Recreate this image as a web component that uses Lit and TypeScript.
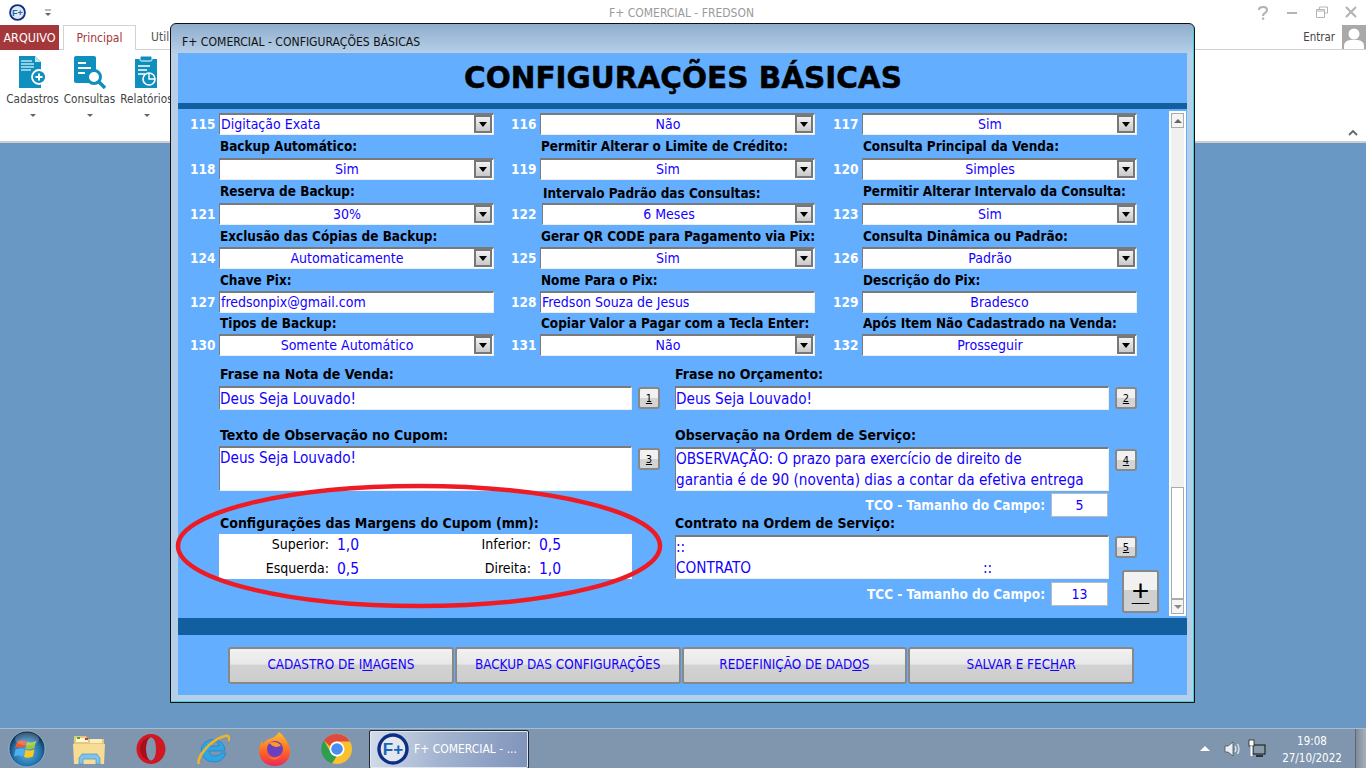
import { LitElement, html, css, svg } from "lit";
import { customElement } from "lit/decorators.js";

type F = { n: number; label?: string; value: string; left?: boolean; plain?: boolean; nudge?: boolean };

const fields: F[] = [
  { n: 115, value: "Digitação Exata", left: true },
  { n: 116, value: "Não" },
  { n: 117, value: "Sim" },
  { n: 118, label: "Backup Automático:", value: "Sim" },
  { n: 119, label: "Permitir Alterar o Limite de Crédito:", value: "Sim" },
  { n: 120, label: "Consulta Principal da Venda:", value: "Simples" },
  { n: 121, label: "Reserva de Backup:", value: "30%" },
  { n: 122, label: "Intervalo Padrão das Consultas:", value: "6 Meses", nudge: true },
  { n: 123, label: "Permitir Alterar Intervalo da Consulta:", value: "Sim" },
  { n: 124, label: "Exclusão das Cópias de Backup:", value: "Automaticamente" },
  { n: 125, label: "Gerar QR CODE para Pagamento via Pix:", value: "Sim" },
  { n: 126, label: "Consulta Dinâmica ou Padrão:", value: "Padrão" },
  { n: 127, label: "Chave Pix:", value: "fredsonpix@gmail.com", left: true, plain: true },
  { n: 128, label: "Nome Para o Pix:", value: "Fredson Souza de Jesus", left: true, plain: true },
  { n: 129, label: "Descrição do Pix:", value: "Bradesco", plain: true },
  { n: 130, label: "Tipos de Backup:", value: "Somente Automático" },
  { n: 131, label: "Copiar Valor a Pagar com a Tecla Enter:", value: "Não" },
  { n: 132, label: "Após Item Não Cadastrado na Venda:", value: "Prosseguir" },
];

const logo = (size: number) => html`<svg width=${size} height=${size} viewBox="0 0 32 32">
  <circle cx="16" cy="16" r="14" fill="#e4e8ee" stroke="#0c2f86" stroke-width="3.4"/>
  <text x="16" y="22" text-anchor="middle" font-family="Liberation Sans, sans-serif" font-weight="700" font-size="17" fill="#1565b8">F+</text>
</svg>`;

const icoDoc = svg`<svg width="30" height="33" viewBox="0 0 30 33">
  <path d="M1 0h16l6 6v26H1z" fill="#0f8fbe"/><path d="M17 0l6 6h-6z" fill="#bfe3f0"/>
  <path d="M3 5h11M3 8h13M3 11h13M3 14h10" stroke="#bfe3f0" stroke-width="1.4"/>
  <circle cx="21" cy="21" r="7" fill="#0f8fbe" stroke="#fff" stroke-width="1.800"/>
  <path d="M21 17.500v7M17.500 21h7" stroke="#fff" stroke-width="2"/></svg>`;
const icoSearch = svg`<svg width="32" height="33" viewBox="0 0 32 33">
  <rect x="0" y="0" width="22" height="27" rx="2" fill="#0f8fbe"/>
  <path d="M4 7h8M4 12h13M4 17h7" stroke="#fff" stroke-width="2"/>
  <circle cx="20" cy="21" r="6.500" fill="#fff" stroke="#0f8fbe" stroke-width="3"/>
  <path d="M25 26l6 6" stroke="#0f8fbe" stroke-width="3.4"/></svg>`;
const icoClip = svg`<svg width="26" height="33" viewBox="0 0 26 33">
  <rect x="1" y="3" width="22" height="29" fill="#0f8fbe"/>
  <rect x="6" y="0" width="12" height="5" rx="1.500" fill="#0f8fbe" stroke="#fff" stroke-width="1"/>
  <path d="M4 10h12M4 14h9M4 18h7" stroke="#fff" stroke-width="1.600"/>
  <circle cx="15" cy="23" r="6" fill="#0f8fbe" stroke="#fff" stroke-width="1.600"/>
  <path d="M15 17v6h6" stroke="#fff" stroke-width="1.400" fill="none"/></svg>`;

const orb = svg`<svg width="38" height="38" viewBox="0 0 38 38">
  <defs><radialGradient id="o" cx=".5" cy=".6" r=".55"><stop offset="0" stop-color="#5cb4e8"/><stop offset=".7" stop-color="#2470a8"/><stop offset="1" stop-color="#0c2f4f"/></radialGradient></defs>
  <circle cx="19" cy="19" r="18" fill="url(#o)" stroke="#9cc0d8" stroke-width=".8"/>
  <path d="M9 12q4-3 9-1l-1.500 7q-5-2-9.500 0z" fill="#f0562c"/>
  <path d="M19 11.500q5 2 9-.5l-1.500 7q-4 2-9 .5z" fill="#9cc83c"/>
  <path d="M7.500 19.500q5-2 9 0l-1.500 7q-4-2-9 0z" fill="#4fb0f0"/>
  <path d="M17.500 20q5 1.500 9-.5l-1.500 7q-4 2-9 .5z" fill="#ffc81c"/>
  <ellipse cx="19" cy="9" rx="12" ry="6.500" fill="#fff" opacity=".2"/></svg>`;
const folder = svg`<svg width="34" height="34" viewBox="0 0 34 34">
  <path d="M2 4h12l2 3h16v22H2z" fill="#e7c877"/>
  <path d="M4 6h12v4H4z" fill="#fff7d8"/><path d="M5 5h3v2H5z" fill="#3fae3f"/><path d="M13 6h3v2h-3z" fill="#c83a3a"/>
  <path d="M18 7h12v4H18z" fill="#f8eebc"/>
  <path d="M1 12h32l-1 20H2z" fill="#f6dc94"/>
  <path d="M7 32v-6l3-4h15l3 4v6h-4v-5H11v5z" fill="#7cc4ee" stroke="#4a94c8" stroke-width=".7"/></svg>`;
const opera = svg`<svg width="32" height="34" viewBox="0 0 32 34">
  <path fill-rule="evenodd" d="M16 2c8 0 14.500 6.700 14.500 15S24 32 16 32 1.500 25.300 1.500 17 8 2 16 2zm0 3.500c-3 0-5 5-5 11.500s2 11.500 5 11.500 5-5 5-11.500S19 5.500 16 5.500z" fill="#d01824"/>
  <path d="M16 5.500c-3 0-5 5-5 11.500s2 11.500 5 11.500c-6 0-11-5-11-11.500S10 5.500 16 5.500z" fill="#a80f1c"/></svg>`;
const ie = svg`<svg width="34" height="34" viewBox="0 0 34 34">
  <path d="M5 18a12 11 0 1 1 24 1H13q1 5 6 5 4 0 6-3h5q-3 9-12 9-11 0-13-12zm8-4h10q-1-5-5-5t-5 5z" fill="#2ea6e4" stroke="#1878c0" stroke-width=".6"/>
  <path d="M3 32c-3-5 10-24 26-28 3-1 5 1 4 5" fill="none" stroke="#f0b428" stroke-width="2.400"/></svg>`;
const fox = svg`<svg width="34" height="36" viewBox="0 0 34 36">
  <defs><linearGradient id="f" x1="0" y1="0" x2="0" y2="1"><stop offset="0" stop-color="#ffbf30"/><stop offset=".55" stop-color="#ff6a22"/><stop offset="1" stop-color="#e8285c"/></linearGradient></defs>
  <path d="M21 1c4 3 10 10 11 18 1 9-6 16-15 16S1 29 1 20c0-5 2-8 3-10l1 3c1-2 3-4 6-5 3-1 7-2 10-7z" fill="url(#f)"/>
  <circle cx="17" cy="18" r="8" fill="#6a3fc0"/><path d="M11 12q8-3 12 3l-5 1q-4-1-7-4z" fill="#ff9a2a"/>
  <path d="M9 24q6 6 14 0-6 9-14 0z" fill="#ff7d1e"/></svg>`;
const chrome = svg`<svg width="32" height="32" viewBox="0 0 32 32">
  <circle cx="16" cy="16" r="15" fill="#fbc02d"/>
  <path d="M16 1a15 15 0 0 1 13 7.500H16a7.500 7.500 0 0 0-7 5L3 7.500A15 15 0 0 1 16 1z" fill="#dd4b3e"/>
  <path d="M3 7.500l6.500 11.500a7.500 7.500 0 0 0 6 4.500L11 30.500A15 15 0 0 1 3 7.500z" fill="#2e9f4f"/>
  <circle cx="16" cy="16" r="7.500" fill="#fff"/><circle cx="16" cy="16" r="5.800" fill="#4a8df0"/></svg>`;

@customElement("app-root")
export class AppRoot extends LitElement {
  static styles = css`
    :host { display: block; width: 1366px; height: 768px; position: relative; overflow: hidden;
      font-family: "DejaVu Sans", sans-serif; font-stretch: condensed; font-size: 13px; background: #6a98c4; }
    * { box-sizing: border-box; }
    .page { display: flex; flex-direction: column; height: 768px; }

    .top { height: 25px; background: #fff; display: flex; align-items: center; position: relative; padding-left: 9px; }
    .qat { margin-left: 18px; display: block; }
    .apptitle { flex: 1; text-align: center; color: #9a9a9a; font-size: 12px; margin-left: 63px; }
    .winbtns { display: flex; width: 118px; }
    .winbtns span { width: 29.500px; display: flex; justify-content: center; }
    .tabs { height: 25px; background: #fff; display: flex; align-items: stretch; border-bottom: 1px solid #d2d2d2; }
    .tab-file { width: 59px; background: #a4373a; color: #fff; font-size: 12.500px; display: flex; align-items: center; justify-content: center; margin-bottom: -1px; }
    .tab-main { width: 73px; margin-left: 4px; border: 1px solid #d2d2d2; border-bottom: 0; background: #fff; margin-bottom: -1px;
      color: #a4373a; font-size: 12px; display: flex; align-items: center; justify-content: center; }
    .tab { margin-left: 15px; color: #555; font-size: 12px; display: flex; align-items: center; }
    .grow { flex: 1; }
    .entrar { color: #444; font-size: 11.400px; display: flex; align-items: center; margin-right: 7px; }
    .avatar { width: 24px; height: 24px; background: #a9a9a9; display: block; }
    .ribbon { height: 93px; background: #fff; border-bottom: 2px solid #cfcfcf; display: flex; padding-left: 4px; position: relative; }
    .rbtn { width: 57px; display: flex; flex-direction: column; align-items: center; color: #444; font-size: 11.700px; padding-top: 5px; }
    .rbtn .ic { height: 34px; display: flex; align-items: center; }
    .rbtn .t { margin-top: 2px; line-height: 16px; white-space: nowrap; }
    .caret { width: 0; height: 0; border: 3px solid transparent; border-top: 3px solid #666; border-bottom: 0; margin-top: 7px; }
    .collapse { position: absolute; right: 8px; bottom: 5px; }
    .desk { flex: 1; }

    .taskbar { height: 40px; background: #8096ae; border-top: 1px solid #a9bccf; display: flex; align-items: center; position: relative; }
    .tb-icon { width: 62px; display: flex; justify-content: center; align-items: center; }
    .tb-start { width: 58px; padding-right: 4px; display: flex; justify-content: center; }
    .tb-active { width: 160px; height: 39px; margin-left: 1px; margin-top: 1px; border: 1px solid #1e2a38; border-radius: 2px;
      background: linear-gradient(100deg, #d3dcea 0, #a3b4d0 45%, #7f93bb 100%); display: flex; align-items: center; padding-left: 7px; color: #fff; font-size: 12px; gap: 5px; box-shadow: inset 0 0 0 1px #dfe7f0; }
    .tray { display: flex; align-items: center; margin-left: auto; height: 100%; color: #fff; }
    .tray svg { display: block; }
    .clock { width: 76px; margin-left: 8px; text-align: center; font-size: 11.500px; line-height: 17px; margin-right: 5px; padding-top: 3px; }
    .showdesk { width: 11px; height: 100%; background: linear-gradient(90deg, #7e8b98, #a6b0ba); border-left: 1px solid #5b6875; }

    .win { position: absolute; left: 170px; top: 23px; width: 1025px; height: 680px; border: 1px solid #111; border-radius: 6px 6px 0 0;
      background: linear-gradient(180deg, #8fadcd 0, #b7d0e8 30px, #b5cfe8 100%); display: flex; flex-direction: column; padding: 0 7px 7px; box-shadow: inset -1px -1px 0 #3fd0d8; }
    .wintitle { height: 29px; flex: none; display: flex; align-items: flex-end; font-size: 12.100px; color: #111; padding: 0 0 4px 4px; }
    .client { flex: 1; background: #63aeff; display: flex; flex-direction: column; min-height: 0; }
    .heading { height: 50px; flex: none; text-align: center; font-family: "DejaVu Sans", sans-serif; font-weight: 700; font-size: 29.500px; line-height: 51px; font-stretch: normal; color: #000; -webkit-text-stroke: 0.5px #000; padding-left: 1px; white-space: nowrap; }
    .band { background: #115f9f; flex: none; }
    .b6 { height: 6px; } .b17 { height: 17px; }
    .body { flex: none; height: 509px; display: flex; }
    .main { flex: 1; padding: 4px 0 0 12px; }
    .fields { display: grid; grid-template-columns: 321px 322px 304px; grid-template-rows: 22px 45px 45px 44px 44px 43px; }
    .f { display: grid; grid-template-columns: 29px 275px; grid-template-rows: 1fr 22px; }
    .lbl { grid-column: 2; font-weight: 700; color: #000; font-size: 13.450px; line-height: 15px; align-self: center; padding-left: 1px; white-space: nowrap; }
    .num { grid-row: 2; grid-column: 1; color: #fff; font-weight: 700; font-size: 13.500px; line-height: 22px; text-align: right; padding-right: 4px; }
    .combo, .text { grid-row: 2; grid-column: 2; height: 22px; background: #fff; color: #1400ff; font-size: 14px; line-height: 18px; display: flex; position: relative;
      border-top: 2px solid #7a7a7a; border-left: 1px solid #7a7a7a; border-bottom: 1px solid #eee; border-right: 1px solid #eee; white-space: nowrap; }
    .combo .v, .text .v { flex: 1; text-align: center; }
    .left .v { text-align: left; padding-left: 1px; }
    .arrow { width: 18px; height: 18px; margin: 0 1px 0 0; border: 2px solid #777; background: linear-gradient(180deg, #f2f2f2, #c9c9c9); display: flex; align-items: center; justify-content: center; flex: none; }
    .arrow i { width: 0; height: 0; border: 4px solid transparent; border-top: 5px solid #000; border-bottom: 0; }
    .nudge .lbl { margin-left: 2px; padding-top: 3px; }
    .nudge .combo { margin-left: 2px; }

    .lower { display: flex; padding-left: 29px; }
    .lc { width: 456px; flex: none; } .rc { width: 470px; flex: none; }
    .h { font-weight: 700; font-size: 14px; color: #000; display: flex; align-items: center; padding-left: 1px; white-space: nowrap; }
    .rc .h { padding-left: 0; }
    .r { display: flex; align-items: flex-start; }
    .box { background: #fff; color: #1400ff; font-size: 15.200px; line-height: 21px; border-top: 2px solid #7a7a7a; border-left: 1px solid #7a7a7a; border-right: 1px solid #eee; border-bottom: 1px solid #eee; }
    .box.w1 { width: 413px; } .box.w2 { width: 434px; }
    .single { height: 24px; padding-top: 1px; }
    .k { width: 22px; height: 22px; flex: none; border: 2px solid #888; border-radius: 3px; background: linear-gradient(180deg, #f1f1f1 50%, #d4d4d4 50%); font-size: 11px; color: #000;
      display: flex; align-items: center; justify-content: center; text-decoration: underline; margin-left: 6px; }
    .side { display: flex; flex-direction: column; align-items: flex-start; }
    .plus { width: 37px; height: 43px; margin: 12px 0 0 13px; border: 2px solid #888; border-radius: 3px; background: linear-gradient(180deg, #f1f1f1 45%, #d0d0d0 45%);
      font: 400 30px/37px "Liberation Sans", sans-serif; text-align: center; color: #000; text-decoration: underline; text-decoration-thickness: 1px; text-underline-offset: 2px; }
    .tam { display: flex; justify-content: flex-end; align-items: center; width: 433px; gap: 6px; color: #fff; font-weight: 700; font-size: 13.500px; }
    .tam b { width: 57px; height: 24px; background: #fff; color: #1400ff; font-weight: 400; font-size: 14px; line-height: 22px; text-align: center; border: 1px solid #bbb; }
    .marg { width: 413px; height: 45px; background: #fff; display: grid; grid-template-columns: 110px 80px 122px 1fr; grid-auto-rows: 24px; align-items: start; color: #000; font-size: 14px; line-height: 20px; }
    .marg .l { text-align: right; }
    .marg .val { color: #1400ff; font-size: 15.500px; padding: 1px 0 0 8px; }

    .scroll { width: 17px; flex: none; margin: 2px 1px 2px 0; background: #f0f0f0; border: 2px solid #fff; display: flex; flex-direction: column; }
    .sb { height: 15px; flex: none; border: 1px solid #aaa; background: #f4f4f4; display: flex; align-items: center; justify-content: center; }
    .up { width: 0; height: 0; border: 4px solid transparent; border-bottom: 4px solid #666; border-top: 0; }
    .dn { width: 0; height: 0; border: 4px solid transparent; border-top: 4px solid #888; border-bottom: 0; }
    .track { flex: 1; display: flex; flex-direction: column; }
    .track i { flex: 1; }
    .thumb { height: 112px; background: #fff; border: 1px solid #aaa; flex: none; }

    .foot { flex: 1; display: flex; gap: 1px; padding: 12px 0 0 50px; align-items: flex-start; }
    .btn { width: 225.750px; height: 37px; border: 2px solid #888; border-radius: 3px; background: linear-gradient(180deg, #f1f1f1 0, #e8e8e8 45%, #d2d2d2 50%, #cdcdcd 100%);
      color: #1400ff; font-size: 13.400px; line-height: 32px; display: flex; justify-content: center; }
    .oval { position: absolute; left: 170px; top: 478px; pointer-events: none; }
  `;

  private field(f: F) {
    const cls = `f ${f.nudge ? "nudge" : ""}`;
    return html`<div class=${cls}>
      ${f.label ? html`<div class="lbl">${f.label}</div>` : html`<div></div>`}
      <div class="num">${f.n}</div>
      ${f.plain
        ? html`<div class="text ${f.left ? "left" : ""}"><span class="v">${f.value}</span></div>`
        : html`<div class="combo ${f.left ? "left" : ""}"><span class="v">${f.value}</span><span class="arrow"><i></i></span></div>`}
    </div>`;
  }

  render() {
    return html`<div class="page">
      <div class="top">
        ${logo(17)}
        <svg class="qat" width="8" height="8" viewBox="0 0 8 8"><path d="M1 1h6" stroke="#777"/><path d="M1 4h6L4 7z" fill="#666"/></svg>
        <span class="apptitle">F+ COMERCIAL - FREDSON</span>
        <div class="winbtns">
          <span><svg width="12" height="14" viewBox="0 0 12 14"><path d="M2 4q0-3 4-3t4 3q0 2-2 3t-2 3" fill="none" stroke="#b4b4b4" stroke-width="2.200"/><rect x="5" y="11.500" width="2.200" height="2.200" fill="#b4b4b4"/></svg></span>
          <span><svg width="12" height="14" viewBox="0 0 12 14"><rect x="1" y="6" width="10" height="2" fill="#b4b4b4"/></svg></span>
          <span><svg width="12" height="12" viewBox="0 0 12 12"><path d="M3.500 3V1h8v6H9M.5 3.500h8v8h-8zM.5 5h8" fill="none" stroke="#b4b4b4"/></svg></span>
          <span><svg width="12" height="12" viewBox="0 0 12 12"><path d="M1 1l10 10M11 1L1 11" stroke="#b4b4b4" stroke-width="2.200"/></svg></span>
        </div>
      </div>
      <div class="tabs">
        <div class="tab-file">ARQUIVO</div>
        <div class="tab-main">Principal</div>
        <div class="tab">Util</div>
        <div class="grow"></div>
        <div class="entrar">Entrar</div>
        <svg class="avatar" viewBox="0 0 24 24"><rect width="24" height="24" fill="#a9a9a9"/><circle cx="12" cy="9" r="5.500" fill="#fff"/><path d="M2 24v-3q0-5 6-6h8q6 1 6 6v3z" fill="#fff"/></svg>
      </div>
      <div class="ribbon">
        <div class="rbtn"><span class="ic">${icoDoc}</span><span class="t">Cadastros</span><span class="caret"></span></div>
        <div class="rbtn"><span class="ic">${icoSearch}</span><span class="t">Consultas</span><span class="caret"></span></div>
        <div class="rbtn"><span class="ic">${icoClip}</span><span class="t">Relatórios</span><span class="caret"></span></div>
        <svg class="collapse" width="10" height="6" viewBox="0 0 10 6"><path d="M1 5l4-4 4 4" fill="none" stroke="#666" stroke-width="1.800"/></svg>
      </div>
      <div class="desk"></div>
      <div class="taskbar">
        <div class="tb-start">${orb}</div>
        <div class="tb-icon">${folder}</div>
        <div class="tb-icon">${opera}</div>
        <div class="tb-icon">${ie}</div>
        <div class="tb-icon">${fox}</div>
        <div class="tb-icon">${chrome}</div>
        <div class="tb-active">${logo(32)}<span>F+ COMERCIAL - ...</span></div>
        <div class="tray">
          <svg width="10" height="6" viewBox="0 0 10 6" style="margin-right:14px"><path d="M5 0l5 5H0z" fill="#fff"/></svg>
          <svg width="18" height="18" viewBox="0 0 18 16" style="margin-right:6px"><path d="M1 5h3l5-4v14l-5-4H1z" fill="#e8eef4" stroke="#444" stroke-width=".7"/><path d="M11 5q2 3 0 6M13.500 3q3 5 0 10" fill="none" stroke="#e8eef4" stroke-width="1.200"/></svg>
          <svg width="18" height="20" viewBox="0 0 18 20"><rect x="5" y="6" width="12" height="9" fill="#8899a8" stroke="#111"/><path d="M8 17h7" stroke="#111" stroke-width="1.500"/><rect x="1" y="1" width="5" height="6" fill="#fff" stroke="#222" stroke-width=".8"/><path d="M3.500 7v10" stroke="#fff" stroke-width="2"/></svg>
          <div class="clock">19:08<br />27/10/2022</div>
          <div class="showdesk"></div>
        </div>
      </div>
    </div>

    <div class="win">
      <div class="wintitle">F+ COMERCIAL - CONFIGURAÇÕES BÁSICAS</div>
      <div class="client">
        <div class="heading">CONFIGURAÇÕES BÁSICAS</div>
        <div class="band b6"></div>
        <div class="body">
          <div class="main">
            <div class="fields">${fields.map((f) => this.field(f))}</div>
            <div class="lower">
              <div class="lc">
                <div class="h" style="height:24px;margin-top:6px">Frase na Nota de Venda:</div>
                <div class="r">
                  <div class="box w1 single">Deus Seja Louvado!</div>
                  <div class="k" style="margin-top:1px">1</div>
                </div>
                <div class="h" style="height:22px;margin-top:14px">Texto de Observação no Cupom:</div>
                <div class="r">
                  <div class="box w1" style="height:45px">Deus Seja Louvado!</div>
                  <div class="k" style="margin-top:2px">3</div>
                </div>
                <div class="h" style="height:22px;margin-top:21px">Configurações das Margens do Cupom (mm):</div>
                <div class="marg">
                  <span class="l">Superior:</span><span class="val">1,0</span>
                  <span class="l">Inferior:</span><span class="val">0,5</span>
                  <span class="l">Esquerda:</span><span class="val">0,5</span>
                  <span class="l">Direita:</span><span class="val">1,0</span>
                </div>
              </div>
              <div class="rc">
                <div class="h" style="height:24px;margin-top:6px">Frase no Orçamento:</div>
                <div class="r">
                  <div class="box w2 single">Deus Seja Louvado!</div>
                  <div class="k" style="margin-top:1px">2</div>
                </div>
                <div class="h" style="height:23px;margin-top:14px;padding-bottom:2px">Observação na Ordem de Serviço:</div>
                <div class="r">
                  <div class="box w2" style="height:44px">OBSERVAÇÃO: O prazo para exercício de direito de<br />garantia é de 90 (noventa) dias a contar da efetiva entrega</div>
                  <div class="k" style="margin-top:2px">4</div>
                </div>
                <div class="tam" style="margin-top:2px">TCO - Tamanho do Campo: <b>5</b></div>
                <div class="h" style="height:18px;padding-bottom:6px">Contrato na Ordem de Serviço:</div>
                <div class="r">
                  <div>
                    <div class="box w2" style="height:44px">::<br />CONTRATO<span style="margin-left:232px">::</span></div>
                    <div class="tam" style="margin-top:3px">TCC - Tamanho do Campo: <b>13</b></div>
                  </div>
                  <div class="side">
                    <div class="k" style="margin-top:1px">5</div>
                    <div class="plus">+</div>
                  </div>
                </div>
              </div>
            </div>
          </div>
          <div class="scroll">
            <div class="sb"><i class="up"></i></div>
            <div class="track"><i></i><div class="thumb"></div></div>
            <div class="sb"><i class="dn"></i></div>
          </div>
        </div>
        <div class="band b17"></div>
        <div class="foot">
          <div class="btn"><span>CADASTRO DE I<u>M</u>AGENS</span></div>
          <div class="btn"><span>BAC<u>K</u>UP DAS CONFIGURAÇÕES</span></div>
          <div class="btn"><span>REDEFINIÇÃO DE DAD<u>O</u>S</span></div>
          <div class="btn"><span>SALVAR E FEC<u>H</u>AR</span></div>
        </div>
      </div>
    </div>
    <svg class="oval" width="500" height="136" viewBox="170 478 500 136">
      <ellipse cx="419" cy="546" rx="241" ry="60" fill="none" stroke="#ed1c24" stroke-width="4.500"/>
    </svg>`;
  }
}
